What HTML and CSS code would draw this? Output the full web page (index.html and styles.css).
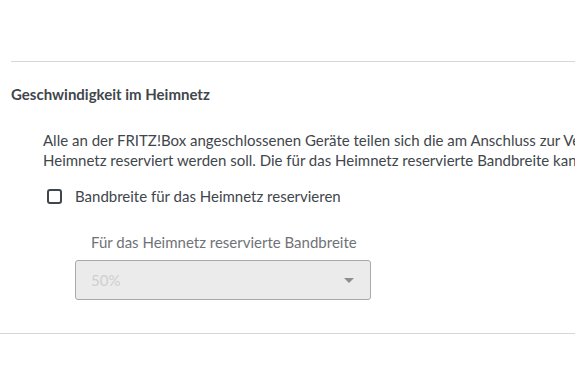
FILE: index.html
```html
<!DOCTYPE html>
<html lang="de">
<head>
  <meta charset="UTF-8">
  <title>Geschwindigkeit im Heimnetz</title>
  <link rel="stylesheet" href="styles.css">
</head>
<body>
  <div class="page">
    <hr class="divider top">

    <h3 class="section-title">Geschwindigkeit im Heimnetz</h3>

    <div class="section-body">
      <p class="intro">Alle an der FRITZ!Box angeschlossenen Geräte teilen sich die am Anschluss zur Verfügung stehende Bandbreite. Hier können Sie festlegen, wie viel Bandbreite für das<br>Heimnetz reserviert werden soll. Die für das Heimnetz reservierte Bandbreite kann von anderen Anwendungen nicht genutzt werden.</p>

      <label class="check-row">
        <span class="checkbox"></span>
        <span class="check-label">Bandbreite für das Heimnetz reservieren</span>
      </label>

      <div class="field">
        <div class="field-label">Für das Heimnetz reservierte Bandbreite</div>
        <div class="select disabled">
          <span class="select-value">50%</span>
          <span class="select-arrow"></span>
        </div>
      </div>
    </div>

    <hr class="divider bottom">
  </div>
</body>
</html>
```

FILE: styles.css
```css
body {
  margin: 0;
  font-family: Lato, "Open Sans", sans-serif;
  color: #3f464c;
  background-color: white;
  overflow: hidden;
}

.page {
  width: 575px;
  padding-top: 61px;
  overflow: hidden;
}

.divider {
  border: none;
  border-top: 1px solid #d6d6d6;
  margin: 0;
}

.divider.top {
  margin-left: 11px;
}

.divider.bottom {
  margin-top: 33px;
}

.section-title {
  margin: 22px 0 0 11px;
  font-size: 15px;
  font-weight: bold;
  line-height: 20px;
}

.section-body {
  padding-left: 43px;
}

.intro {
  margin: 26px 0 0 0;
  font-size: 15px;
  line-height: 20px;
  white-space: nowrap;
}

.check-row {
  display: flex;
  align-items: center;
  gap: 13px;
  margin-top: 16px;
  padding-left: 4px;
  font-size: 15px;
  line-height: 20px;
}

.checkbox {
  width: 11px;
  height: 11px;
  border: 2px solid #3f464c;
  border-radius: 3px;
}

.field {
  margin-top: 26px;
  padding-left: 32px;
}

.field-label {
  padding-left: 16px;
  font-size: 15px;
  line-height: 20px;
  color: #6f7377;
}

.select {
  display: flex;
  align-items: center;
  justify-content: space-between;
  width: 296px;
  height: 40px;
  margin-top: 8px;
  padding: 0 15px;
  box-sizing: border-box;
  border: 1px solid #a9a9a9;
  border-radius: 3px;
  background-color: #ebebeb;
}

.select-value {
  font-size: 15px;
  color: #cfcfcf;
}

.select-arrow {
  width: 0;
  height: 0;
  border-left: 5px solid transparent;
  border-right: 5px solid transparent;
  border-top: 5px solid #8e8e8e;
  margin-right: 1px;
}
```
